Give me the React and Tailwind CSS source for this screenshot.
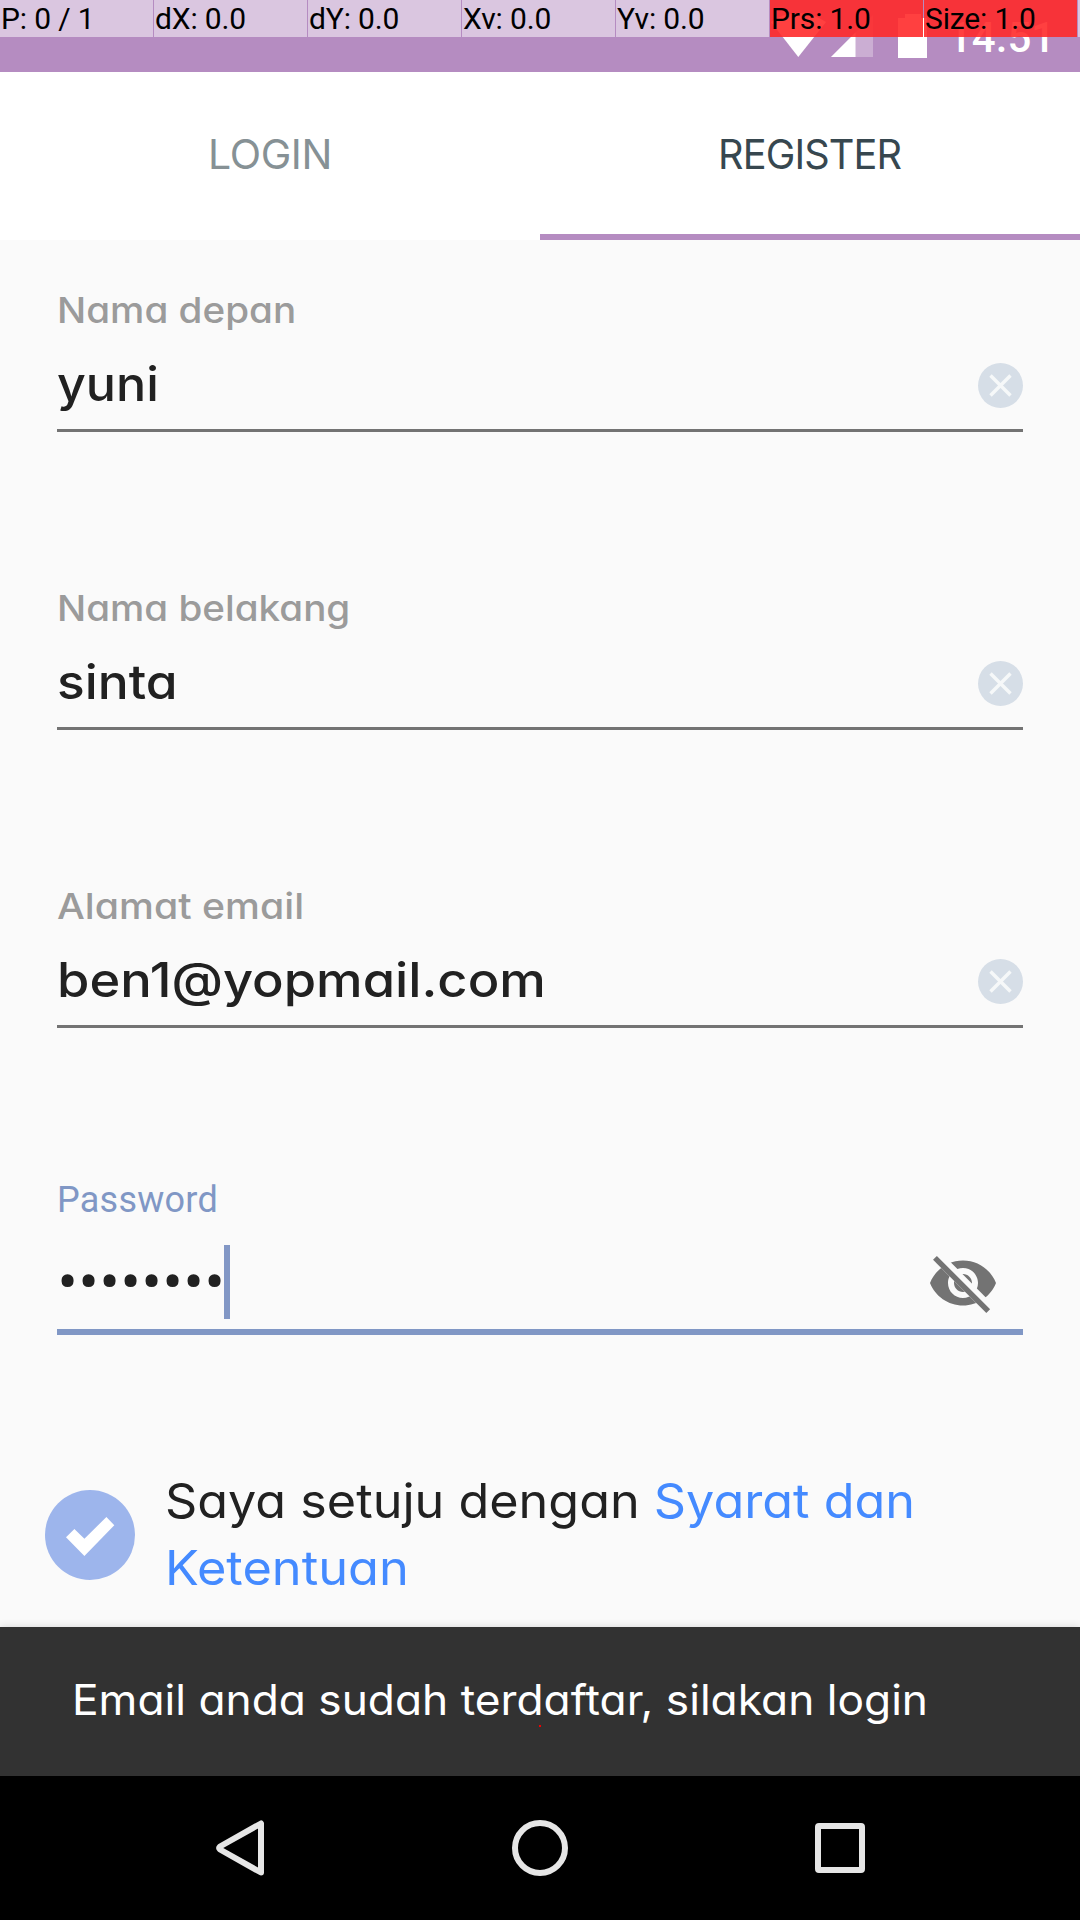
const GEO = "font-['Inter',sans-serif] [font-feature-settings:'cv11']";

const pointerStats = [
  { text: "P: 0 / 1" },
  { text: "dX: 0.0" },
  { text: "dY: 0.0" },
  { text: "Xv: 0.0" },
  { text: "Yv: 0.0" },
  { text: "Prs: 1.0", hot: true },
  { text: "Size: 1.0", hot: true },
  { text: "" },
];

function PointerBar() {
  return (
    <div className="absolute inset-x-0 top-0 flex h-[37px] gap-px overflow-hidden">
      {pointerStats.map((s, i) => (
        <div
          key={i}
          className={`w-[153px] shrink-0 whitespace-pre pl-px font-['Roboto',sans-serif] text-[30px] leading-[37px] tracking-[-0.15px] text-black ${
            s.hot ? "bg-[rgba(255,40,40,0.89)]" : "bg-white/50"
          }`}
        >
          {s.text}
        </div>
      ))}
    </div>
  );
}

function StatusBar() {
  return (
    <div className="relative h-[72px] bg-[#b58cc1]">
      <div className="flex h-full items-start justify-end pr-[35px] text-white">
        <svg className="mt-[12px] h-[46px] w-[160px]" viewBox="770 12 160 46" fill="currentColor">
          <path d="M798.3 57 771 22Q798 4 826 22Z" />
          <path d="M831 57h42V15Z" opacity="0.3" />
          <path d="M831 57h24.500V32.500Z" />
          <path d="M905 14h16v4h6v40h-29V18h7Z" />
        </svg>
        <div className="ml-[18px] mt-[14px] w-[97px] whitespace-nowrap font-['Roboto',sans-serif] text-[42px] font-medium leading-[48px]">
          14.51
        </div>
      </div>
      <PointerBar />
    </div>
  );
}

function Tabs() {
  return (
    <div className={`grid h-[168px] grid-cols-2 bg-white text-center text-[41px] leading-[160px] ${GEO}`}>
      <div className="pt-[2px] tracking-[-0.4px] text-[#869195]">LOGIN</div>
      <div className="border-b-[6px] border-[#b58cc1] pt-[2px] text-[#37474f]">
        <span className="inline-block scale-x-[0.968] tracking-[-0.9px]">REGISTER</span>
      </div>
    </div>
  );
}

function ClearIcon() {
  return (
    <svg className="mt-[9px] size-[45px]" viewBox="0 0 45 45">
      <circle cx="22.500" cy="22.500" r="22.500" fill="#d6dee7" />
      <path d="M12.500 12.500 32.500 32.500M32.500 12.500 12.500 32.500" stroke="#f6f8f9" strokeWidth="3.400" />
    </svg>
  );
}

function Field({ label, value, labelClass, valueClass }) {
  return (
    <div className={`mb-[154px] border-b-[3px] border-[#737373] pb-[16px] font-medium ${GEO}`}>
      <div className={`origin-left text-[36px] leading-[44px] text-[#9b9b9b] ${labelClass}`}>{label}</div>
      <div className="mt-[22px] flex h-[59px] items-start justify-between">
        <span className={`origin-left text-[48px] leading-[60px] text-[#212121] ${valueClass}`}>{value}</span>
        <ClearIcon />
      </div>
    </div>
  );
}

function EyeOffIcon() {
  return (
    <svg className="mr-[24px] mt-[2px] size-[72px]" viewBox="0 0 24 24">
      <clipPath id="eye-cut">
        <path d="M2 4.270 19.730 22 22.270 19.460 4.540 1.730V1H23V23H1V4.270Z" />
      </clipPath>
      <path
        clipPath="url(#eye-cut)"
        fill="#737373"
        d="M12 4.500C7 4.500 2.730 7.610 1 12c1.730 4.390 6 7.500 11 7.500s9.270-3.110 11-7.500c-1.730-4.390-6-7.500-11-7.500zM12 17c-2.760 0-5-2.240-5-5s2.240-5 5-5 5 2.240 5 5-2.240 5-5 5zM12 9c-1.660 0-3 1.340-3 3s1.340 3 3 3 3-1.340 3-3-1.340-3-3-3z"
      />
      <path d="M2.650 3.620 20.400 21.370" stroke="#737373" strokeWidth="1.800" />
    </svg>
  );
}

function PasswordField() {
  return (
    <div className="-mt-[4px] border-b-[6px] border-[#8097c5] pb-[10px]">
      <div className="font-['Roboto',sans-serif] text-[36px] leading-[44px] tracking-[0.25px] text-[#8097c5]">Password</div>
      <div className="mt-[23px] flex h-[74px] items-start">
        <div className="flex font-['Roboto',sans-serif] text-[60px] leading-[76px] text-[#212121]">
          {"••••••••".split("").map((dot, i) => (
            <span key={i} className="flex w-[21px] justify-center">{dot}</span>
          ))}
        </div>
        <div className="-ml-px h-full w-[6px] bg-[#8297c5]" />
        <div className="grow" />
        <EyeOffIcon />
      </div>
    </div>
  );
}

function Agreement() {
  return (
    <div className={`mt-[132px] flex h-[160px] items-start gap-[30px] pl-[45px] ${GEO}`}>
      <svg className="mt-[23px] size-[90px] shrink-0" viewBox="0 0 90 90">
        <circle cx="45" cy="45" r="45" fill="#9db5ec" />
        <path d="M21 47.300 29.400 39 39.400 48.700 61.400 27 69.300 35.300 39.400 66Z" fill="#fff" />
      </svg>
      <div className="text-[48px] leading-[67px] text-[#212121]">
        <div className="origin-left scale-x-[1.048] whitespace-nowrap">
          Saya setuju dengan <span className="text-[#448aff]">Syarat dan</span>
        </div>
        <div className="origin-left scale-x-[1.052] text-[#448aff]">Ketentuan</div>
      </div>
    </div>
  );
}

function Snackbar() {
  return (
    <div className="relative h-[149px] bg-[#323232] pl-[72px] pt-[43px] shadow-[0_0_8px_rgba(0,0,0,0.15)]">
      <div className={`origin-left scale-x-[1.054] whitespace-nowrap text-[42px] leading-[60px] text-white ${GEO}`}>
        Email anda sudah terdaftar, silakan login
      </div>
      <div className="absolute left-[539px] top-[98px] h-[2px] w-[2px] bg-[#f00000]" />
    </div>
  );
}

function NavBar() {
  return (
    <div className="h-[144px] bg-black">
      <svg className="block h-[144px] w-full" viewBox="0 0 1080 144" fill="none" stroke="#e6e6e6" strokeWidth="6">
        <path d="M261 47.500V96.500L220 73.500Q218.500 72 220 70.500Z" strokeLinejoin="round" />
        <circle cx="540" cy="72" r="25" />
        <rect x="818" y="50" width="44" height="44" rx="1" />
      </svg>
    </div>
  );
}

export default function App() {
  return (
    <div className="flex h-[1920px] w-[1080px] flex-col overflow-hidden bg-[#fafafa]">
      <StatusBar />
      <Tabs />
      <div className="px-[57px] pt-[48px]">
        <Field label="Nama depan" value="yuni" labelClass="scale-x-[1.073]" valueClass="scale-x-[1.045]" />
        <Field label="Nama belakang" value="sinta" labelClass="scale-x-[1.072]" valueClass="scale-x-[1.072]" />
        <Field label="Alamat email" value="ben1@yopmail.com" labelClass="scale-x-[1.091]" valueClass="scale-x-[1.092]" />
        <PasswordField />
      </div>
      <Agreement />
      <Snackbar />
      <NavBar />
    </div>
  );
}
